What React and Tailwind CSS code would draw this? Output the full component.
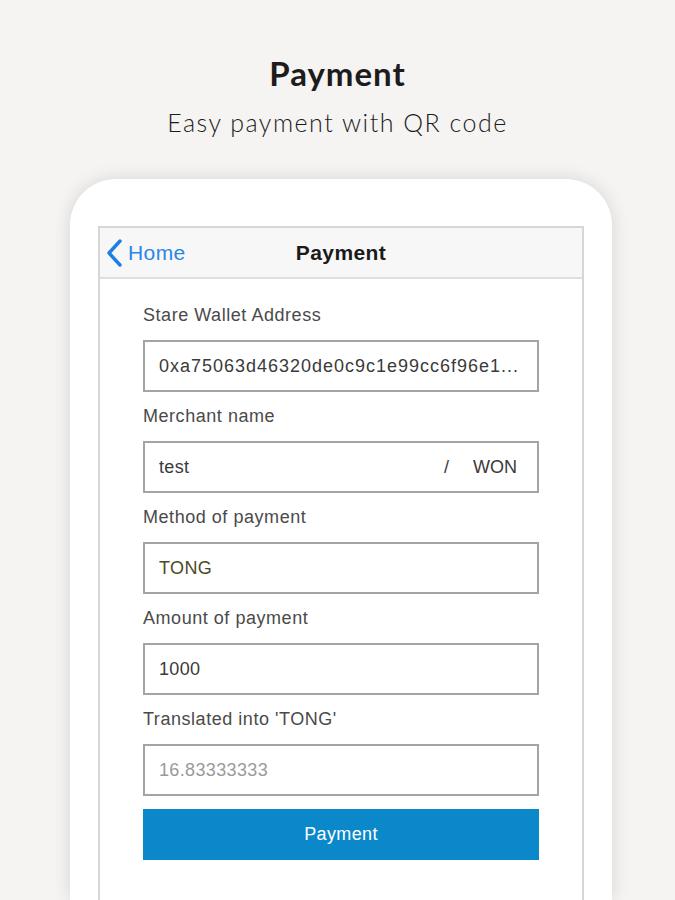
import React from "react";

const fields = [
  { label: "Stare Wallet Address", value: "0xa75063d46320de0c9c1e99cc6f96e1...", tone: "text-[#3a3a3a]", wide: true },
  { label: "Merchant name", value: "test", tone: "text-[#3a3a3a]", suffix: true },
  { label: "Method of payment", value: "TONG", tone: "text-[#4b4b1e]" },
  { label: "Amount of payment", value: "1000", tone: "text-[#3a3a3a]" },
  { label: "Translated into 'TONG'", value: "16.83333333", tone: "text-[#9a9a9a]" },
];

const Field = ({ label, value, tone, suffix, wide }) => (
  <div className="mb-[12px]">
    <div className="h-[24px] mb-[13px] text-[18px] leading-[24px] tracking-[0.03em] text-[#4a4a4a]">{label}</div>
    <div className="h-[52px] border-2 border-[#a4a4a4] flex items-center pl-[14px] pr-[20px]">
      <span className={`text-[18px] ${wide ? "tracking-[0.055em]" : "tracking-[0.02em]"} ${tone}`}>{value}</span>
      {suffix && (
        <span className="ml-auto flex items-center text-[18px] text-[#3a3a3a]">
          <span className="mr-[24px]">/</span>
          <span>WON</span>
        </span>
      )}
    </div>
  </div>
);

const App = () => {
  return (
    <div
      className="h-[900px] w-[675px] overflow-hidden bg-[#f5f4f2] flex flex-col items-center"
      style={{ fontFamily: "'Liberation Sans', Arial, sans-serif" }}
    >
      <h1
        className="mt-[52px] text-[33px] leading-[42px] font-bold tracking-[0.03em] text-[#1c1c1c]"
        style={{ fontFamily: "Lato, 'Open Sans', sans-serif" }}
      >
        Payment
      </h1>
      <p
        className="mt-[12px] text-[25px] leading-[32px] font-light tracking-[0.06em] text-[#1c1c1c]"
        style={{ fontFamily: "Lato, 'Open Sans', sans-serif" }}
      >
        Easy payment with QR code
      </p>

      <div className="mt-[41px] ml-[7px] w-[542px] flex-1 rounded-t-[46px] bg-white pt-[47px] px-[28px] shadow-[0_0_18px_rgba(0,0,0,0.13)]">
        <div className="h-full border-x-2 border-t-2 border-[#d6d6d6] bg-white">
          <div className="relative h-[51px] bg-[#f7f7f7] border-b-2 border-[#dedede] flex items-center justify-center">
            <div className="absolute left-[5px] top-0 h-full flex items-center">
              <svg width="18" height="28" viewBox="0 0 18 28" fill="none">
                <path d="M15 2 L4 14 L15 26" stroke="#1b7fe3" strokeWidth="3.4" strokeLinecap="round" strokeLinejoin="round" />
              </svg>
              <span className="ml-[5px] text-[21px] tracking-[0.02em] text-[#2a86e6]">Home</span>
            </div>
            <span className="text-[21px] font-semibold tracking-[0.02em] text-[#1a1a1a]">Payment</span>
          </div>

          <div className="px-[43px] pt-[24px]">
            {fields.map((f) => (
              <Field key={f.label} {...f} />
            ))}
            <button className="mt-[1px] w-full h-[51px] bg-[#0a88c9] text-white text-[18px] tracking-[0.02em]">
              Payment
            </button>
          </div>
        </div>
      </div>
    </div>
  );
};

export default App;
